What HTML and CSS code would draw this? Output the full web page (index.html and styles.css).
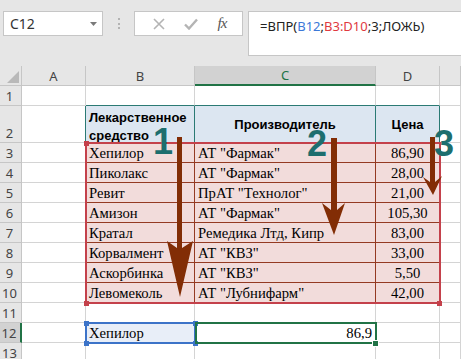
FILE: index.html
```html
<!DOCTYPE html>
<html lang="ru">
<head>
<meta charset="utf-8">
<title>ВПР</title>
<link rel="stylesheet" href="styles.css">
</head>
<body>
<div class="page">
  <div class="toolbar">
    <div class="namebox">
      <span class="ref">C12</span>
      <svg class="dd" width="7" height="4" viewBox="0 0 7 4"><path d="M0 0H7L3.5 4Z" fill="#7a7a7a"/></svg>
    </div>
    <div class="grip"><i></i><i></i><i></i></div>
    <div class="btns">
      <svg class="ico" width="12" height="12" viewBox="0 0 12 12"><path d="M1 1L11 11M11 1L1 11" stroke="#b4b4b4" stroke-width="1.6" fill="none"/></svg>
      <svg class="ico" width="14" height="12" viewBox="0 0 14 12"><path d="M1 6.5L5 10.5L13 1.5" stroke="#b4b4b4" stroke-width="2.4" fill="none"/></svg>
      <span class="fx">fx</span>
    </div>
    <div class="formula">=ВПР(<span class="r1">B12</span>;<span class="r2">B3:D10</span>;3;ЛОЖЬ)</div>
  </div>

  <div class="sheet">
    <div class="corner"><svg width="12" height="12" viewBox="0 0 12 12"><path d="M12 0V12H0Z" fill="#b9b9b9"/></svg></div>
    <div class="colhead">A</div>
    <div class="colhead">B</div>
    <div class="colhead sel">C</div>
    <div class="colhead">D</div>
    <div class="colhead"></div>

    <div class="rowhead">1</div>
    <div class="cell"></div><div class="cell tb"></div><div class="cell tb"></div><div class="cell tb"></div><div class="cell"></div>

    <div class="rowhead">2</div>
    <div class="cell tr"></div>
    <div class="cell th wrap"><span class="wraptext">Лекарственное средство</span></div>
    <div class="cell th">Производитель</div>
    <div class="cell th">Цена</div>
    <div class="cell"></div>

    <div class="rowhead">3</div>
    <div class="cell"></div><div class="cell td">Хепилор</div><div class="cell td">АТ "Фармак"</div><div class="cell td num">86,90</div><div class="cell"></div>
    <div class="rowhead">4</div>
    <div class="cell"></div><div class="cell td">Пиколакс</div><div class="cell td">АТ "Фармак"</div><div class="cell td num">28,00</div><div class="cell"></div>
    <div class="rowhead">5</div>
    <div class="cell"></div><div class="cell td">Ревит</div><div class="cell td">ПрАТ "Технолог"</div><div class="cell td num">21,00</div><div class="cell"></div>
    <div class="rowhead">6</div>
    <div class="cell"></div><div class="cell td">Амизон</div><div class="cell td">АТ "Фармак"</div><div class="cell td num">105,30</div><div class="cell"></div>
    <div class="rowhead">7</div>
    <div class="cell"></div><div class="cell td">Кратал</div><div class="cell td">Ремедика Лтд, Кипр</div><div class="cell td num">83,00</div><div class="cell"></div>
    <div class="rowhead">8</div>
    <div class="cell"></div><div class="cell td">Корвалмент</div><div class="cell td">АТ "КВЗ"</div><div class="cell td num">33,00</div><div class="cell"></div>
    <div class="rowhead">9</div>
    <div class="cell"></div><div class="cell td">Аскорбинка</div><div class="cell td">АТ "КВЗ"</div><div class="cell td num">5,50</div><div class="cell"></div>
    <div class="rowhead">10</div>
    <div class="cell"></div><div class="cell td">Левомеколь</div><div class="cell td">АТ "Лубнифарм"</div><div class="cell td num">42,00</div><div class="cell"></div>

    <div class="rowhead">11</div>
    <div class="cell"></div><div class="cell"></div><div class="cell"></div><div class="cell"></div><div class="cell"></div>
    <div class="rowhead sel">12</div>
    <div class="cell"></div><div class="cell lookup">Хепилор</div><div class="cell result">86,9</div><div class="cell"></div><div class="cell"></div>
    <div class="rowhead">13</div>
    <div class="cell"></div><div class="cell"></div><div class="cell"></div><div class="cell"></div><div class="cell"></div>
  </div>

  <div class="range-red"></div>
  <div class="h h-red h-red-tl"></div>
  <div class="h h-red h-red-bl"></div>
  <div class="h h-red h-red-br"></div>

  <div class="range-blue"></div>
  <div class="h h-blue h-blue-tl"></div>
  <div class="h h-blue h-blue-tr"></div>
  <div class="h h-blue h-blue-bl"></div>
  <div class="h h-blue h-blue-br"></div>

  <div class="range-green"></div>
  <div class="h h-green"></div>

  <svg class="arrows" width="461" height="359" viewBox="0 0 461 359">
    <path d="M177 137H182V248L193 241L180 297L167 241L177 248Z" fill="#822d05"/>
    <path d="M331 138H337V210L345 203L334 235L322 203L331 210Z" fill="#822d05"/>
    <path d="M430 137H435V182L442 176L433 195L423 177L430 182Z" fill="#822d05"/>
  </svg>
  <div class="mark m1">1</div>
  <div class="mark m2">2</div>
  <div class="mark m3">3</div>
</div>
</body>
</html>
```

FILE: styles.css
```css
html, body {
  margin: 0;
  padding: 0;
  background: #ffffff;
}

.page {
  position: relative;
  width: 461px;
  height: 359px;
  overflow: hidden;
}

/* ---------- formula bar ---------- */
.toolbar {
  height: 66px;
  box-sizing: border-box;
  background: #e6e6e6;
  display: flex;
  align-items: flex-start;
  padding: 11px 0 0 3px;
}

.namebox {
  width: 100px;
  height: 25px;
  box-sizing: border-box;
  background: #fff;
  border: 1px solid #c6c6c6;
  display: flex;
  align-items: center;
  justify-content: space-between;
  padding: 0 5px 0 6px;
  font-family: "Noto Sans", "Open Sans", sans-serif;
  font-size: 14px;
  color: #333;
}

.grip {
  width: 31px;
  height: 25px;
  display: flex;
  flex-direction: column;
  align-items: center;
  justify-content: center;
  gap: 2.5px;
}
.grip i {
  display: block;
  width: 2px;
  height: 2px;
  background: #b3b3b3;
}

.btns {
  width: 109px;
  height: 25px;
  box-sizing: border-box;
  background: #fff;
  border: 1px solid #c6c6c6;
  display: flex;
  align-items: center;
  justify-content: space-around;
  padding: 0 6px 0 8px;
}
.fx {
  font-family: "Liberation Serif", serif;
  font-style: italic;
  font-size: 15px;
  color: #555;
  letter-spacing: -1px;
}

.formula {
  flex: 1;
  margin-left: 5px;
  margin-right: -2px;
  height: 45px;
  box-sizing: border-box;
  background: #fff;
  border: 1px solid #c6c6c6;
  padding: 5px 0 0 11px;
  font-family: "Noto Sans", "Open Sans", sans-serif;
  font-size: 13px;
  color: #222;
  white-space: nowrap;
}
.formula .r1 { color: #3c78d8; }
.formula .r2 { color: #e0393e; }

/* ---------- sheet grid ---------- */
.sheet {
  display: grid;
  grid-template-columns: 22px 64px 109px 181px 64px 1fr;
  grid-template-rows: 20px 20px 37px repeat(8, 20px) 20px 20px 20px;
}

.corner, .colhead, .rowhead, .cell {
  box-sizing: border-box;
  border-right: 1px solid #d4d4d4;
  border-bottom: 1px solid #d4d4d4;
  overflow: hidden;
  white-space: nowrap;
}

.corner {
  background: #e6e6e6;
  border-color: #c6c6c6;
  display: flex;
  align-items: flex-end;
  justify-content: flex-end;
  padding: 0 2px 2px 0;
}

.colhead {
  background: #e6e6e6;
  border-right-color: #c6c6c6;
  border-bottom-color: #c6c6c6;
  font-family: "Noto Sans", "Open Sans", sans-serif;
  font-size: 13px;
  color: #444;
  display: flex;
  align-items: center;
  justify-content: center;
}
.colhead.sel {
  background: #d2d2d2;
  color: #217346;
  border-bottom: 2px solid #217346;
}

.rowhead {
  background: #e6e6e6;
  border-right-color: #c6c6c6;
  border-bottom-color: #c6c6c6;
  font-family: "Noto Sans", "Open Sans", sans-serif;
  font-size: 13px;
  line-height: 17px;
  color: #444;
  display: flex;
  align-items: flex-end;
  justify-content: center;
  padding-right: 2px;
}
.rowhead.sel {
  background: #d2d2d2;
  border-right: 2px solid #217346;
}

.cell {
  display: flex;
  align-items: flex-end;
  padding: 0 3px;
  font-family: "Liberation Serif", "Times New Roman", serif;
  font-size: 14.67px;
  line-height: 17px;
  color: #000;
}

.tb { border-bottom-color: #2b7a74; }
.tr { border-right-color: #2b7a74; }

.th {
  background: #dce6f1;
  border-right-color: #2b7a74;
  border-bottom-color: #2b7a74;
  font-family: "Liberation Sans", Arial, sans-serif;
  font-weight: bold;
  font-size: 13px;
  justify-content: center;
  align-items: center;
}
.th.wrap {
  justify-content: flex-start;
  align-items: flex-end;
  white-space: normal;
  overflow: visible;
}
.wraptext {
  line-height: 18px;
  margin-bottom: -3px;
}

.td {
  background: #f2dcdb;
  border-right-color: #943a22;
  border-bottom-color: #943a22;
}
.td.num { justify-content: center; }

.lookup { background: #e8eef8; }
.result { justify-content: flex-end; }

/* ---------- overlays ---------- */
.range-red {
  position: absolute;
  left: 85px;
  top: 142px;
  width: 356px;
  height: 162px;
  box-sizing: border-box;
  border: 2px solid #c4414b;
}
.range-blue {
  position: absolute;
  left: 85px;
  top: 322px;
  width: 111px;
  height: 22px;
  box-sizing: border-box;
  border: 2px solid #3c73c8;
}
.range-green {
  position: absolute;
  left: 195px;
  top: 322px;
  width: 182px;
  height: 22px;
  box-sizing: border-box;
  border: 2px solid #217346;
}

.h {
  position: absolute;
  width: 5px;
  height: 5px;
}
.h-red { background: #c4414b; }
.h-red-tl { left: 84px; top: 141px; }
.h-red-bl { left: 84px; top: 301px; }
.h-red-br { left: 437px; top: 301px; }

.h-blue { background: #3c73c8; }
.h-blue-tl { left: 84px; top: 321px; }
.h-blue-tr { left: 193px; top: 321px; }
.h-blue-bl { left: 84px; top: 341px; }
.h-blue-br { left: 193px; top: 341px; }

.h-green {
  background: #217346;
  left: 373px;
  top: 341px;
  box-shadow: 0 0 0 1px #fff;
}

.arrows {
  position: absolute;
  left: 0;
  top: 0;
  pointer-events: none;
}

.mark {
  position: absolute;
  font-family: "Liberation Sans", Arial, sans-serif;
  font-weight: bold;
  font-size: 36px;
  line-height: 36px;
  color: #1d6e6e;
}
.m1 { left: 153px; top: 124px; }
.m2 { left: 307px; top: 126px; }
.m3 { left: 434px; top: 126px; }
```
